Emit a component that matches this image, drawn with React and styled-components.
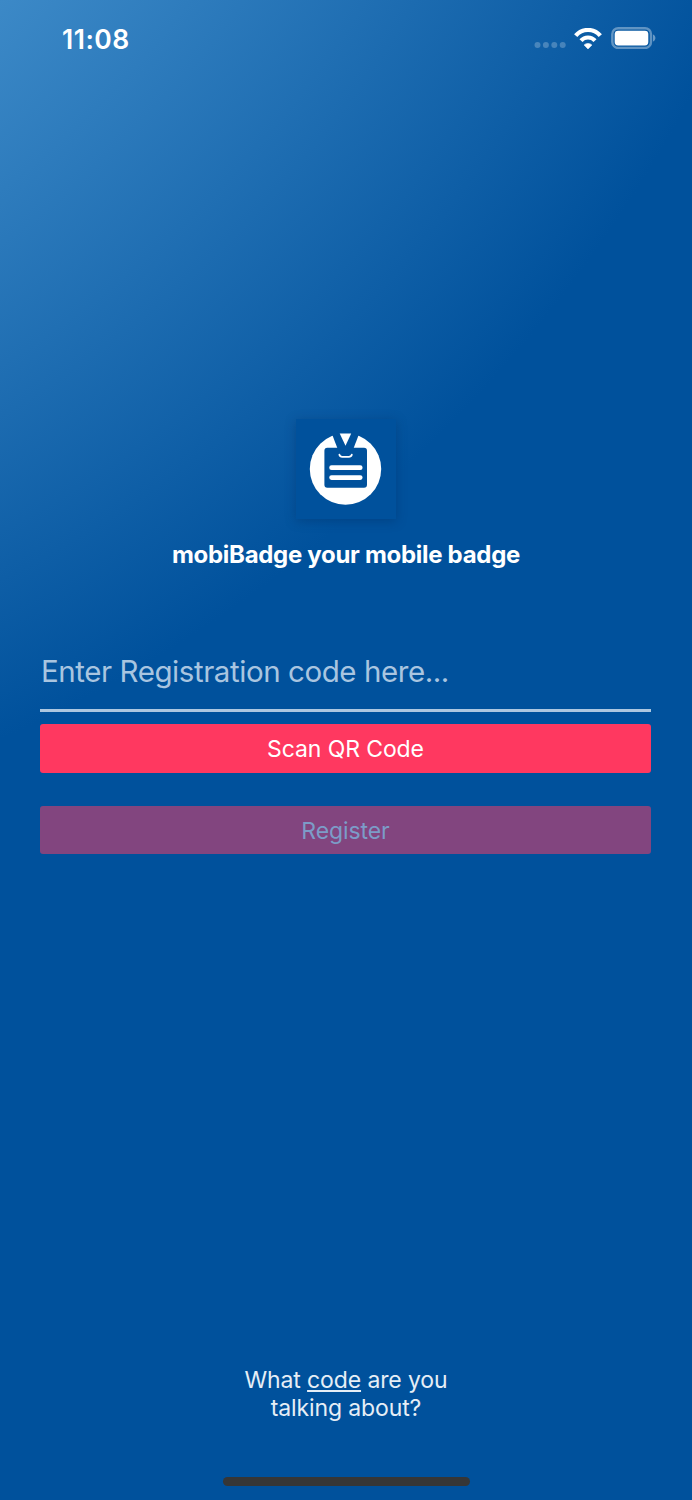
import React, { useState } from 'react';
import styled, { createGlobalStyle } from 'styled-components';

const GlobalStyle = createGlobalStyle`
  * {
    box-sizing: border-box;
  }

  body {
    margin: 0;
    font-family: Inter, Roboto, 'Liberation Sans', sans-serif;
    color: #fff;
  }
`;

const Screen = styled.div`
  display: flex;
  flex-direction: column;
  align-items: center;
  width: 692px;
  height: 1500px;
  overflow: hidden;
  background: radial-gradient(circle 1468px at -600px -600px, #3c89c7 848px, #00519c 1468px);
`;

const StatusBar = styled.div`
  display: flex;
  justify-content: space-between;
  align-items: center;
  width: 100%;
  height: 76px;
  padding: 0 36px 0 62px;
`;

const Time = styled.div`
  font-size: 26.5px;
  font-weight: 600;
  line-height: 32px;
  letter-spacing: 0.5px;
  margin-top: 2px;
`;

const StatusIcons = styled.div`
  display: flex;
  align-items: center;
  gap: 9px;
`;

const SignalDots = styled.svg`
  margin: 14px -1px 0 0;
`;

const Logo = styled.div`
  display: flex;
  justify-content: center;
  align-items: center;
  width: 100px;
  height: 100px;
  margin-top: 343px;
  background-color: #00519c;
  box-shadow: 0 2px 10px rgba(0, 40, 90, 0.35);
`;

const Title = styled.h1`
  margin: 21px 0 0;
  font-size: 24px;
  font-weight: 700;
  line-height: 30px;
  letter-spacing: -0.3px;
`;

const Form = styled.form`
  display: flex;
  flex-direction: column;
  align-self: stretch;
  margin: 64px 41px 0 40px;
`;

const CodeInput = styled.input`
  height: 78px;
  padding: 0 0 1px 1px;
  border: none;
  border-bottom: 3px solid #adc7e0;
  outline: none;
  background: transparent;
  color: #fff;
  font-family: inherit;
  font-size: 29.5px;
  letter-spacing: -0.43px;

  &::placeholder {
    color: #a9c5e0;
    opacity: 1;
  }
`;

const Button = styled.button`
  height: ${(props) => props.$height};
  margin-top: ${(props) => props.$gap};
  padding: 1px 0 0;
  border: none;
  border-radius: 3px;
  background-color: ${(props) => (props.disabled ? '#82457f' : '#ff3860')};
  color: ${(props) => (props.disabled ? '#7c9cc8' : '#fff')};
  font-family: inherit;
  font-size: 23px;
  letter-spacing: -0.1px;
`;

const Help = styled.p`
  margin: auto 0 0;
  font-size: 23px;
  line-height: 28px;
  letter-spacing: -0.12px;
  text-align: center;
  color: #e6eef6;
`;

const HelpLink = styled.span`
  text-decoration: underline;
  text-decoration-thickness: 2px;
  text-underline-offset: 2px;
  text-decoration-skip-ink: none;
`;

const HomeIndicator = styled.div`
  width: 247px;
  height: 9px;
  margin: 55px 0 14px;
  border-radius: 5px;
  background-color: #363636;
`;

const SignalIcon = () => (
  <SignalDots width="32" height="8" viewBox="0 0 32 8" fill="#fff" fillOpacity="0.24">
    <circle cx="3.5" cy="4" r="3" />
    <circle cx="11.9" cy="4" r="3" />
    <circle cx="20.3" cy="4" r="3" />
    <circle cx="28.7" cy="4" r="3" />
  </SignalDots>
);

const WifiIcon = () => (
  <svg width="28" height="21" viewBox="0 0 28 21" fill="none" stroke="#fff">
    <path d="M1.7 7.7 A16 16 0 0 1 26.3 7.7" strokeWidth="4.2" />
    <path d="M7 12.7 A9.4 9.4 0 0 1 21 12.7" strokeWidth="4.1" />
    <path d="M14 20.9 L10.1 17 A5.6 5.6 0 0 1 17.9 17 Z" fill="#fff" strokeWidth="0.6" strokeLinejoin="round" />
  </svg>
);

const BatteryIcon = () => (
  <svg width="45" height="22" viewBox="0 0 45 22">
    <rect x="1.3" y="1.2" width="38.7" height="19.8" rx="6" fill="none" stroke="#fff" strokeOpacity="0.36" strokeWidth="2.4" />
    <rect x="3.7" y="3.7" width="33.6" height="14.8" rx="3.4" fill="#fff" />
    <path d="M42 7.5 C45.2 8.8 45.2 13.2 42 14.5 Z" fill="#fff" fillOpacity="0.4" />
  </svg>
);

const BadgeIcon = () => (
  <svg width="100" height="100" viewBox="0 0 100 100">
    <circle cx="49.5" cy="50" r="35.7" fill="#fff" />
    <path d="M35.2 13 L63.8 13 L57.3 30 L41.7 30 Z" fill="#00519c" />
    <path d="M43.7 14.6 L55.2 14.6 L49.5 26.8 Z" fill="#fff" />
    <rect x="28.4" y="28.8" width="42.6" height="40" rx="3" fill="#00519c" />
    <path d="M43.4 35.7 Q44 37.8 46.2 37.8 H52.8 Q55.2 37.8 55.8 35.7" fill="none" stroke="#fff" strokeWidth="1.8" strokeLinecap="round" />
    <path d="M35.6 48.7 H64.2 M35.6 58.6 H64.2" stroke="#fff" strokeWidth="4.8" strokeLinecap="round" />
  </svg>
);

const App = () => {
  const [code, setCode] = useState('');

  return (
    <>
      <GlobalStyle />
      <Screen>
        <StatusBar>
          <Time>11:08</Time>
          <StatusIcons>
            <SignalIcon />
            <WifiIcon />
            <BatteryIcon />
          </StatusIcons>
        </StatusBar>

        <Logo>
          <BadgeIcon />
        </Logo>
        <Title>mobiBadge your mobile badge</Title>

        <Form onSubmit={(e) => e.preventDefault()}>
          <CodeInput
            type="text"
            name="code"
            placeholder="Enter Registration code here..."
            value={code}
            onChange={(e) => setCode(e.target.value)}
          />
          <Button type="button" $height="49px" $gap="12px">Scan QR Code</Button>
          <Button type="submit" $height="48px" $gap="33px" disabled={!code}>Register</Button>
        </Form>

        <Help>
          What <HelpLink>code</HelpLink> are you
          <br />
          talking about?
        </Help>
        <HomeIndicator />
      </Screen>
    </>
  );
};

export default App;
